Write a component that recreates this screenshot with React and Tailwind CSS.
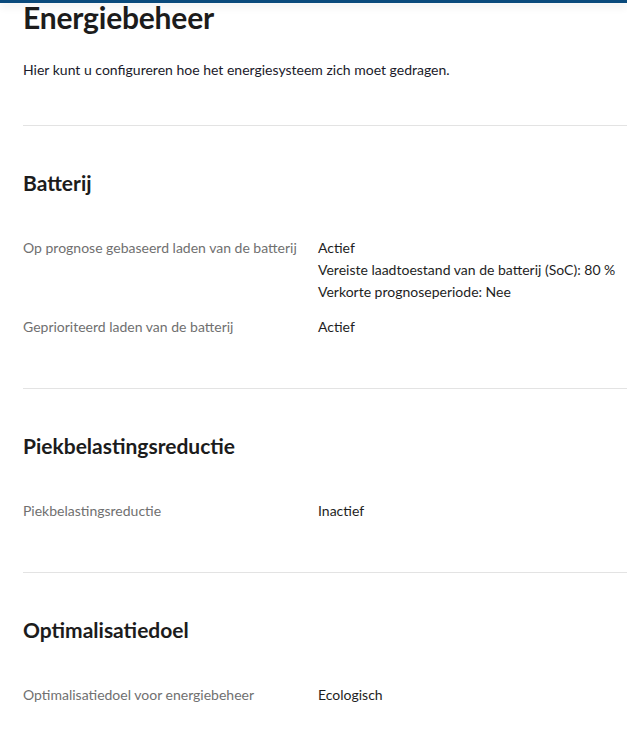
import React from 'react';

const sections = [
  {
    title: 'Batterij',
    rows: [
      {
        label: 'Op prognose gebaseerd laden van de batterij',
        values: ['Actief', 'Vereiste laadtoestand van de batterij (SoC): 80 %', 'Verkorte prognoseperiode: Nee'],
      },
      { label: 'Geprioriteerd laden van de batterij', values: ['Actief'] },
    ],
  },
  {
    title: 'Piekbelastingsreductie',
    rows: [{ label: 'Piekbelastingsreductie', values: ['Inactief'] }],
  },
  {
    title: 'Optimalisatiedoel',
    rows: [{ label: 'Optimalisatiedoel voor energiebeheer', values: ['Ecologisch'] }],
  },
];

export default function App() {
  return (
    <div className="relative min-h-[730px] bg-white overflow-hidden" style={{ fontFamily: 'Lato, "Open Sans", sans-serif' }}>
      {/* fixed header edge */}
      <div className="absolute top-0 left-0 right-0 h-[3px] bg-[#0a4a7c] shadow-[0_3px_9px_rgba(0,0,0,0.12)] z-10" />

      <div className="pl-[23px]">
        <h1 className="pt-[2px] text-[30px] leading-[30px] font-bold text-[#1c1c1c] tracking-[-0.2px]">Energiebeheer</h1>
        <p className="mt-[28px] text-[14px] leading-[20px] text-[#1a1a2a]">
          Hier kunt u configureren hoe het energiesysteem zich moet gedragen.
        </p>

        {sections.map((s, i) => (
          <section key={s.title} className={`border-t border-[#e3e3e3] ${i === 0 ? 'mt-[45px]' : 'mt-[46px]'}`}>
            <h2 className="mt-[45px] text-[21px] leading-[24px] font-bold text-[#1c1c1c]">{s.title}</h2>
            <div className="mt-[42px] mb-[50px] flex flex-col gap-[13px]">
              {s.rows.map((r) => (
                <div key={r.label} className="flex text-[14px] leading-[22px]">
                  <div className="w-[295px] shrink-0 text-[#707070]">{r.label}</div>
                  <div className="text-[#1e1e1e]">
                    {r.values.map((v) => (
                      <div key={v}>{v}</div>
                    ))}
                  </div>
                </div>
              ))}
            </div>
          </section>
        ))}
      </div>
    </div>
  );
}
